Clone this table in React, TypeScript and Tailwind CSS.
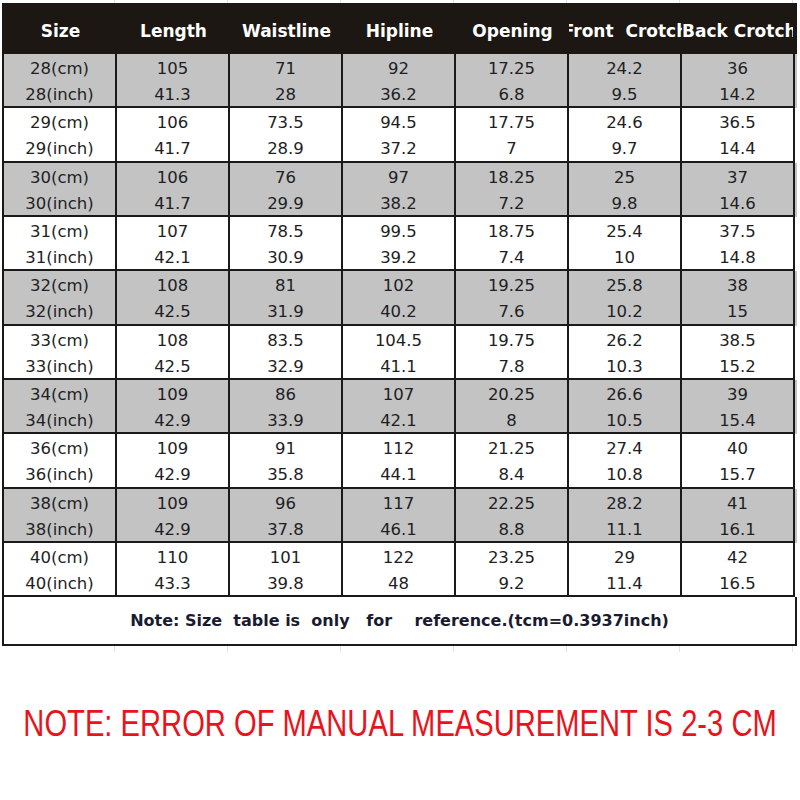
import React from "react";

type Group = { size: string; cm: string[]; inch: string[] };

const groups: Group[] = [
  { size: "28", cm: ["105", "71", "92", "17.25", "24.2", "36"], inch: ["41.3", "28", "36.2", "6.8", "9.5", "14.2"] },
  { size: "29", cm: ["106", "73.5", "94.5", "17.75", "24.6", "36.5"], inch: ["41.7", "28.9", "37.2", "7", "9.7", "14.4"] },
  { size: "30", cm: ["106", "76", "97", "18.25", "25", "37"], inch: ["41.7", "29.9", "38.2", "7.2", "9.8", "14.6"] },
  { size: "31", cm: ["107", "78.5", "99.5", "18.75", "25.4", "37.5"], inch: ["42.1", "30.9", "39.2", "7.4", "10", "14.8"] },
  { size: "32", cm: ["108", "81", "102", "19.25", "25.8", "38"], inch: ["42.5", "31.9", "40.2", "7.6", "10.2", "15"] },
  { size: "33", cm: ["108", "83.5", "104.5", "19.75", "26.2", "38.5"], inch: ["42.5", "32.9", "41.1", "7.8", "10.3", "15.2"] },
  { size: "34", cm: ["109", "86", "107", "20.25", "26.6", "39"], inch: ["42.9", "33.9", "42.1", "8", "10.5", "15.4"] },
  { size: "36", cm: ["109", "91", "112", "21.25", "27.4", "40"], inch: ["42.9", "35.8", "44.1", "8.4", "10.8", "15.7"] },
  { size: "38", cm: ["109", "96", "117", "22.25", "28.2", "41"], inch: ["42.9", "37.8", "46.1", "8.8", "11.1", "16.1"] },
  { size: "40", cm: ["110", "101", "122", "23.25", "29", "42"], inch: ["43.3", "39.8", "48", "9.2", "11.4", "16.5"] },
];

const headers = ["Size", "Length", "Waistline", "Hipline", "Opening", "Front  Crotch", "Back Crotch"];

export default function App() {
  return (
    <div className="w-[800px] h-[800px] bg-white overflow-hidden" style={{ fontFamily: "'DejaVu Sans', sans-serif" }}>
      {/* faint sheet gridlines above */}
      <div className="ml-[2px] grid grid-cols-[113px_113px_113px_113px_113px_113px_113px] h-[3px]">
        {headers.map((h, i) => (
          <div key={i} className="border-r border-[#e2e2e2]" />
        ))}
      </div>
      <div className="ml-[2px] w-[795px] border-l-2 border-t-2 border-[#1c1712]">
        {/* header */}
        <div className="grid grid-cols-[113px_113px_113px_113px_113px_113px_111px] h-[49px] bg-[#1c1712] text-white font-bold text-[17px]">
          {headers.map((h, i) => (
            <div
              key={i}
              className={
                "flex items-center overflow-hidden whitespace-pre pt-[4px] " +
                (i === 6 ? "justify-start" : "justify-center")
              }
            >
              <span className="shrink-0">{h}</span>
            </div>
          ))}
        </div>
        {groups.map((g, gi) => (
          <div
            key={g.size}
            className={
              "grid grid-cols-[113px_113px_113px_113px_113px_113px_113px] text-[16.5px] text-[#1e1e24] " +
              (gi % 2 === 0 ? "bg-[#c3c3c3]" : "bg-white")
            }
          >
            {[
              [g.size + "(cm)", g.size + "(inch)"],
              ...g.cm.map((c, i) => [c, g.inch[i]]),
            ].map((pair, ci) => (
              <div
                key={ci}
                className={
                  "border-r-2 border-b-2 border-[#1a1a1a] flex flex-col items-center pt-[2px] " +
                  (gi % 3 === 1 ? "h-[55px]" : "h-[54px]")
                }
              >
                <div className="leading-[26px]">{pair[0]}</div>
                <div className="leading-[26px]">{pair[1]}</div>
              </div>
            ))}
          </div>
        ))}
        <div className="h-[49px] border-r-2 border-b-2 border-[#1a1a1a] flex items-center justify-center">
          <span className="whitespace-pre font-bold text-[16px] text-[#1a1a30]">
            {"Note: Size  table is  only   for    reference.(tcm=0.3937inch)"}
          </span>
        </div>
      </div>
      {/* faint sheet gridlines below */}
      <div className="ml-[2px] grid grid-cols-[113px_113px_113px_113px_113px_113px_113px] h-[6px]">
        {headers.map((h, i) => (
          <div key={i} className="border-r border-[#e2e2e2]" />
        ))}
      </div>
      <div className="mt-[52px] flex justify-center">
        <p
          className="shrink-0 text-[36px] leading-[40px] text-[#e8141c] whitespace-nowrap scale-x-[0.81]"
          style={{ fontFamily: "'Liberation Sans', Arial, sans-serif" }}
        >
          NOTE: ERROR OF MANUAL MEASUREMENT IS 2-3 CM
        </p>
      </div>
    </div>
  );
}
